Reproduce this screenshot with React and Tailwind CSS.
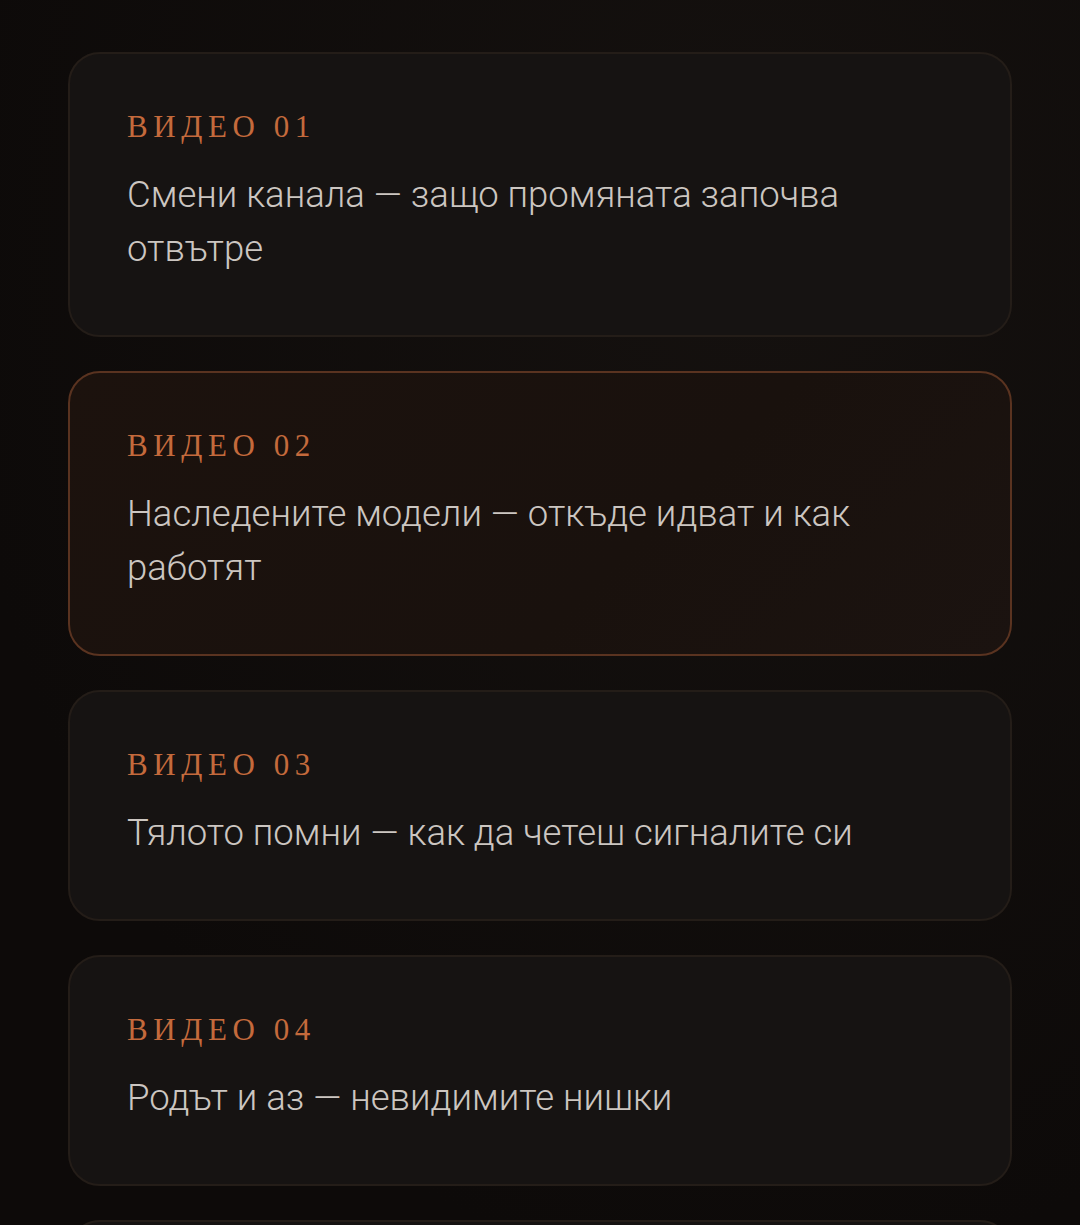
import React from "react";

const videos = [
  { n: "01", title: "Смени канала — защо промяната започва отвътре" },
  { n: "02", title: "Наследените модели — откъде идват и как работят", active: true },
  { n: "03", title: "Тялото помни — как да четеш сигналите си" },
  { n: "04", title: "Родът и аз — невидимите нишки" },
];

export default function App() {
  return (
    <div className="h-[1225px] overflow-hidden bg-[radial-gradient(ellipse_at_70%_20%,#15110f_0%,#0d0a09_75%)] px-[68px] pt-[52px]">
      <div className="flex flex-col gap-[34px]">
        {videos.map((v) => (
          <div
            key={v.n}
            className={
              v.active
                ? "rounded-[32px] border-2 border-[#5a3320] bg-[linear-gradient(135deg,#1c120d_0%,#19110d_60%,#1b1310_100%)] px-[57px] pt-[55px] pb-[59px]"
                : "rounded-[32px] border-2 border-[#241d18] bg-[#161312] px-[57px] pt-[55px] pb-[59px]"
            }
          >
            <div className="font-['Liberation_Serif',serif] text-[31px] leading-[36px] tracking-[0.18em] text-[#c46a3c]">
              ВИДЕО {v.n}
            </div>
            <p className="mt-[23px] max-w-[760px] font-['Roboto_Light','Roboto',sans-serif] text-[36.5px] font-light leading-[54px] text-[#ccc6c1]">
              {v.title}
            </p>
          </div>
        ))}
        <div className="h-[120px] rounded-[32px] border-2 border-[#241d18] bg-[#161312]" />
      </div>
    </div>
  );
}
